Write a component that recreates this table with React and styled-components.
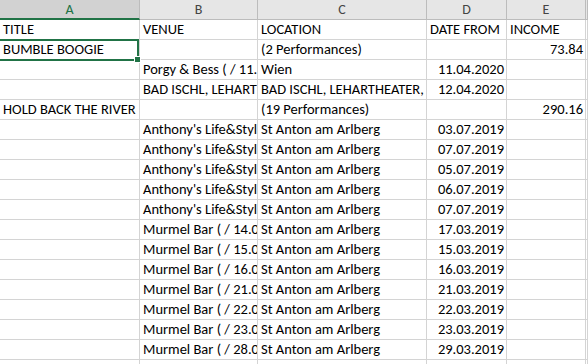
import React from 'react'
import styled, { createGlobalStyle } from 'styled-components'

const GlobalStyle = createGlobalStyle`
  html, body {
    margin: 0;
    padding: 0;
    background: #fff;
    overflow: hidden;
  }
`

const columns = ['A', 'B', 'C', 'D', 'E', '']

const rows = [
    ['TITLE', 'VENUE', 'LOCATION', 'DATE FROM', 'INCOME'],
    ['BUMBLE BOOGIE', '', '(2 Performances)', '', '73.84'],
    ['', 'Porgy & Bess ( / 11.04.2020)', 'Wien', '11.04.2020', ''],
    ['', 'BAD ISCHL, LEHARTHEATER ( / 12.04.2020)', 'BAD ISCHL, LEHARTHEATER, Bad Ischl', '12.04.2020', ''],
    ['HOLD BACK THE RIVER', '', '(19 Performances)', '', '290.16'],
    ['', "Anthony's Life&Style ( / 03.07.2019)", 'St Anton am Arlberg', '03.07.2019', ''],
    ['', "Anthony's Life&Style ( / 07.07.2019)", 'St Anton am Arlberg', '07.07.2019', ''],
    ['', "Anthony's Life&Style ( / 05.07.2019)", 'St Anton am Arlberg', '05.07.2019', ''],
    ['', "Anthony's Life&Style ( / 06.07.2019)", 'St Anton am Arlberg', '06.07.2019', ''],
    ['', "Anthony's Life&Style ( / 07.07.2019)", 'St Anton am Arlberg', '07.07.2019', ''],
    ['', 'Murmel Bar ( / 14.03.2019)', 'St Anton am Arlberg', '17.03.2019', ''],
    ['', 'Murmel Bar ( / 15.03.2019)', 'St Anton am Arlberg', '15.03.2019', ''],
    ['', 'Murmel Bar ( / 16.03.2019)', 'St Anton am Arlberg', '16.03.2019', ''],
    ['', 'Murmel Bar ( / 21.03.2019)', 'St Anton am Arlberg', '21.03.2019', ''],
    ['', 'Murmel Bar ( / 22.03.2019)', 'St Anton am Arlberg', '22.03.2019', ''],
    ['', 'Murmel Bar ( / 23.03.2019)', 'St Anton am Arlberg', '23.03.2019', ''],
    ['', 'Murmel Bar ( / 28.03.2019)', 'St Anton am Arlberg', '29.03.2019', ''],
    ['', '', '', '', ''],
]

// numbers and dates sit on the right like excel does
const isNumeric = (v) => /^[\d.]+$/.test(v)

const App = () => {
    return (
        <>
            <GlobalStyle />
            <Sheet>
                {columns.map((c, i) => (
                    <ColHeader key={c + i} $active={i === 0}>{c}</ColHeader>
                ))}
                {rows.map((row, r) =>
                    [...row, ''].map((value, c) => (
                        <Cell key={r + '-' + c}>
                            <Text $right={isNumeric(value) && r > 0}>{value}</Text>
                            {r === 1 && c === 0 && (
                                <Selection>
                                    <Handle />
                                </Selection>
                            )}
                        </Cell>
                    ))
                )}
            </Sheet>
        </>
    )
}

const Sheet = styled.div`
  display: grid;
  grid-template-columns: 140px 118px 169px 80px 79px 1fr;
  grid-auto-rows: 20px;
  width: 588px;
  height: 364px;
  overflow: hidden;
  font-family: Carlito, Lato, 'Liberation Sans', sans-serif;
  font-size: 14.5px;
  color: #000;
`

const ColHeader = styled.div`
  box-sizing: border-box;
  display: flex;
  align-items: center;
  justify-content: center;
  background: ${(p) => (p.$active ? '#d2d2d2' : '#e6e6e6')};
  color: ${(p) => (p.$active ? '#217346' : '#444')};
  border-right: 1px solid #bcbcbc;
  border-bottom: ${(p) => (p.$active ? '2px solid #217346' : '1px solid #bcbcbc')};
  font-size: 14px;
  padding-top: ${(p) => (p.$active ? '1px' : '0')};
`

const Cell = styled.div`
  box-sizing: border-box;
  position: relative;
  display: flex;
  min-width: 0;
  border-right: 1px solid #d4d4d4;
  border-bottom: 1px solid #d4d4d4;
`

const Text = styled.span`
  flex: 1;
  min-width: 0;
  display: flex;
  align-items: flex-end;
  justify-content: ${(p) => (p.$right ? 'flex-end' : 'flex-start')};
  padding: 0 2px 1px 3px;
  white-space: nowrap;
  overflow: hidden;
  line-height: 18px;
`

const Selection = styled.div`
  position: absolute;
  z-index: 2;
  top: -1px;
  left: -2px;
  width: 141px;
  height: 22px;
  box-sizing: border-box;
  border: 2px solid #217346;
  pointer-events: none;
`

const Handle = styled.div`
  position: absolute;
  right: -4px;
  bottom: -4px;
  width: 5px;
  height: 5px;
  background: #217346;
  border: 1px solid #fff;
`

export default App
